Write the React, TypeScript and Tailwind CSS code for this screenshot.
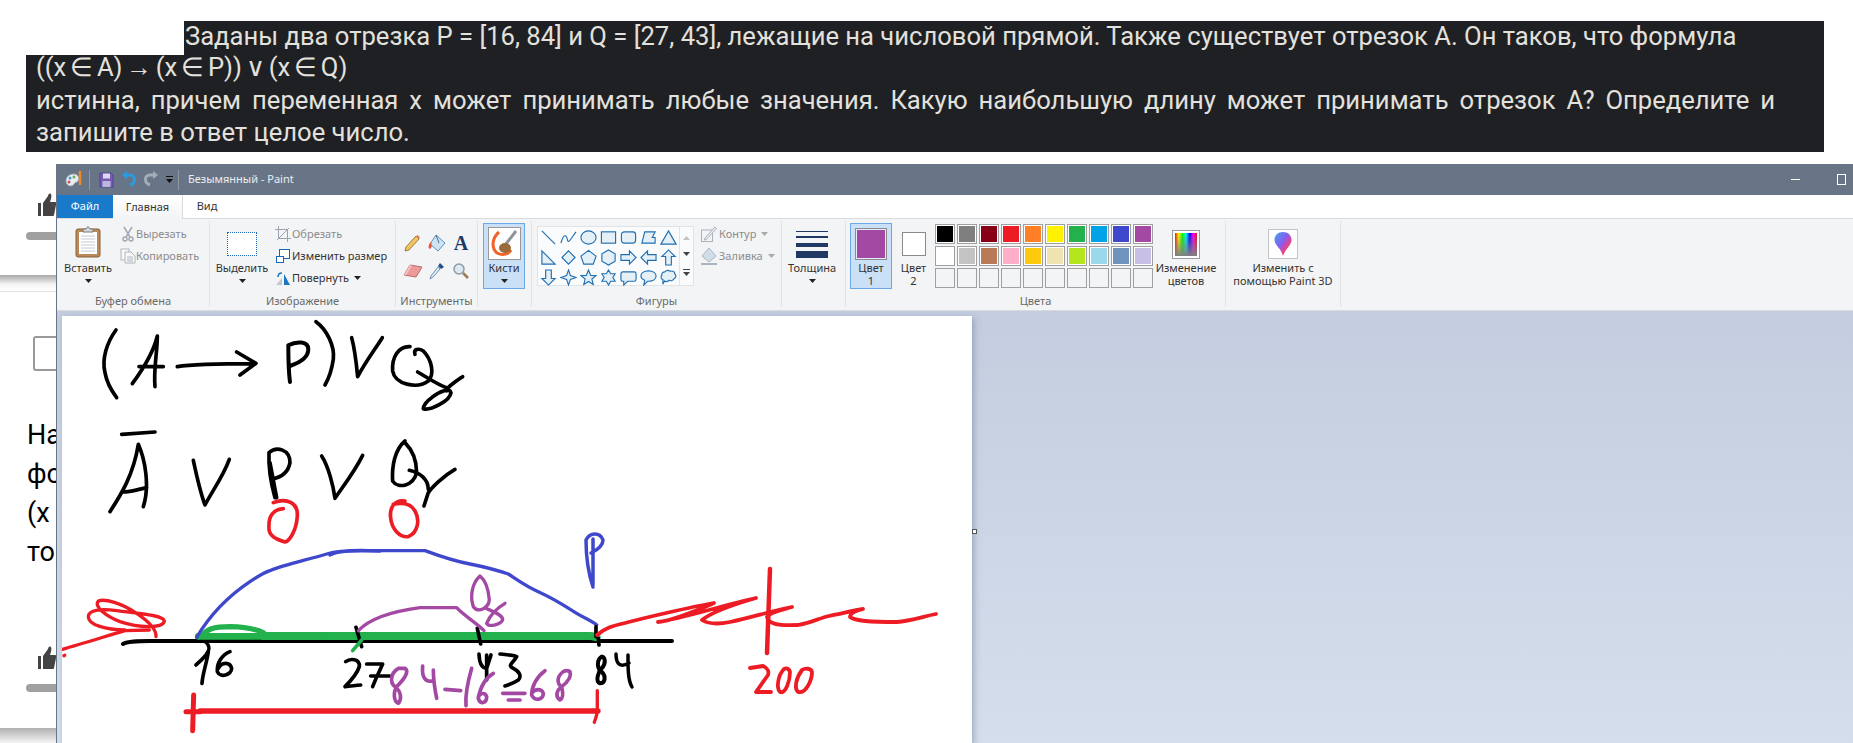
import { ReactNode } from "react";

const Arrow = ({ color = "#222" }: { color?: string }) => (
  <svg width="7" height="4" viewBox="0 0 7 4">
    <path d="M0 0H7L3.5 4Z" fill={color} />
  </svg>
);

const Group = ({ width, label, children }: { width: string; label: string; children: ReactNode }) => (
  <div className={`${width} mt-[2px] h-[86px] shrink-0 flex flex-col border-r border-[#e2e3e4]`}>
    <div className="h-[73px] flex">{children}</div>
    <div className="h-[13px] leading-[13px] text-center text-[#6a6a6a]">{label}</div>
  </div>
);

const Large = ({ width, icon, lines, arrow, on }: { width: string; icon: ReactNode; lines: string[]; arrow?: boolean; on?: boolean }) => (
  <div className={`${width} h-[66px] mt-[2px] flex flex-col items-center ${on ? "bg-[#c9e0f7] outline outline-[#6ba8e5] -outline-offset-1" : ""}`}>
    <div className="h-[38px] flex items-center justify-center">{icon}</div>
    {lines.map((t) => (
      <div key={t} className="h-[13px] leading-[13px] whitespace-nowrap text-[#333]">
        {t}
      </div>
    ))}
    {arrow && (
      <div className="h-[13px] flex items-center">
        <Arrow />
      </div>
    )}
  </div>
);

const Small = ({ icon, text, gray, arrow, iconWidth }: { icon: ReactNode; text: string; gray?: boolean; arrow?: boolean; iconWidth: string }) => (
  <div className="h-[22px] flex items-center">
    <div className={`${iconWidth} flex justify-center shrink-0`}>{icon}</div>
    <span className={gray ? "text-[#8c8c8c]" : "text-[#333]"}>{text}</span>
    {arrow && (
      <span className="ml-[5px] flex">
        <Arrow color={gray ? "#aaa" : "#222"} />
      </span>
    )}
  </div>
);

const shapes: ReactNode[] = [
  <path d="M2 2L16 16" />,
  <path d="M1 15C4 4 7 6 8 12C9 16 13 8 17 3" fill="none" />,
  <ellipse cx="9" cy="9" rx="8" ry="7" />,
  <rect x="1.5" y="3" width="15" height="12" />,
  <rect x="1.5" y="3" width="15" height="12" rx="3" />,
  <path d="M2 15L5 3H16L13 9H16V15Z" />,
  <path d="M9 2L17 16H1Z" />,
  <path d="M2 2L16 16H2Z" />,
  <path d="M9 2L16 9L9 16L2 9Z" />,
  <path d="M9 1.5L17 7.5L14 16H4L1 7.5Z" />,
  <path d="M9 1L16 5V13L9 17L2 13V5Z" />,
  <path d="M1 6H10V2L17 9L10 16V12H1Z" />,
  <path d="M17 6H8V2L1 9L8 16V12H17Z" />,
  <path d="M6 17V8H2L9 1L16 8H12V17Z" />,
  <path d="M6 1V10H2L9 17L16 10H12V1Z" />,
  <path d="M9 1L11 7L17 9L11 11L9 17L7 11L1 9L7 7Z" />,
  <path d="M9 1L11.3 6.8L17 7L12.6 10.6L14 16.5L9 13.2L4 16.5L5.4 10.6L1 7L6.7 6.8Z" />,
  <path d="M9 1L11.3 5H16L13.6 9L16 13H11.3L9 17L6.7 13H2L4.4 9L2 5H6.7Z" />,
  <path d="M3 3H15Q17 3 17 5V11Q17 13 15 13H8L4 17V13H3Q1 13 1 11V5Q1 3 3 3Z" />,
  <path d="M9 2C14 2 17 4.500 17 7.500C17 10.500 14 13 9 13H8L4 17L5 12C2.500 11 1 9.500 1 7.500C1 4.500 4 2 9 2Z" />,
  <path d="M5 3C7 1 9 1 11 2.500C13 1.500 16 3 15.500 5C17.500 6.500 17 9.500 15 10C14.500 12 11 13 9.500 12C8 13.500 6 13.500 5 12.500L3 16L3.200 11.500C1 10.500 .5 8 2 6.500C1.500 5 3 3 5 3Z" />,
];

const row1 = ["#000000", "#7f7f7f", "#880015", "#ed1c24", "#ff7f27", "#fff200", "#22b14c", "#00a2e8", "#3f48cc", "#a349a4"];
const row2 = ["#ffffff", "#c3c3c3", "#b97a57", "#ffaec9", "#ffc90e", "#efe4b0", "#b5e61d", "#99d9ea", "#7092be", "#c8bfe7"];
const row3 = Array(10).fill("#f3f4f6");

const PasteIcon = () => (
  <svg width="26" height="32" viewBox="0 0 26 32">
    <rect x="1" y="3" width="24" height="28" rx="2" fill="#b98a58" stroke="#8a6238" />
    <rect x="4" y="6" width="18" height="22" fill="#fff" />
    <path d="M6 10H20M6 13H20M6 16H20M6 19H20M6 22H20M6 25H20" stroke="#c2c8d0" />
    <path d="M8 6V3H11L13 0.500L15 3H18V6Z" fill="#d6d9dd" stroke="#777" />
  </svg>
);
const CutIcon = () => (
  <svg width="12" height="16" viewBox="0 0 12 16" fill="none" stroke="#a4a9b4" strokeWidth="1.500">
    <path d="M2 1L8 11M10 1L4 11" />
    <circle cx="3" cy="13" r="2" />
    <circle cx="9" cy="13" r="2" />
  </svg>
);
const CopyIcon = () => (
  <svg width="16" height="16" viewBox="0 0 16 16" fill="#f7f8f9" stroke="#b0b6bf">
    <rect x="1" y="1" width="8" height="11" />
    <path d="M5 4H11L15 8V15H5Z" />
    <path d="M7 9H13M7 11H13M7 13H13" />
  </svg>
);
const CropIcon = () => (
  <svg width="16" height="16" viewBox="0 0 16 16" fill="none" stroke="#9aa2ad">
    <path d="M3.500 0V12.500H16M0 3.500H12.500V16M2 14L14 2" />
  </svg>
);
const ResizeIcon = () => (
  <svg width="14" height="14" viewBox="0 0 14 14" fill="#fff" stroke="#1b67b2">
    <rect x="3.500" y=".5" width="10" height="9" />
    <rect x=".5" y="7.500" width="7" height="6" />
  </svg>
);
const RotateIcon = () => (
  <svg width="16" height="15" viewBox="0 0 16 15">
    <path d="M1 14L7 7V14Z" fill="#c4c8cc" />
    <path d="M9 14V3L15 14Z" fill="#1b76c4" />
    <path d="M3 6C3 3 5 2 7 2" fill="none" stroke="#1b76c4" strokeWidth="1.500" />
  </svg>
);

const tools: ReactNode[] = [
  <svg width="18" height="18" viewBox="0 0 18 18">
    <path d="M2 13L12 2L15 5L5 16L1 17Z" fill="#f2c463" stroke="#9a8040" />
    <path d="M12 2L15 5L16 4L14 1Z" fill="#e07a6a" />
  </svg>,
  <svg width="20" height="20" viewBox="0 0 20 20">
    <path d="M9 2L18 10L11 18L3 11Z" fill="#cfe3f2" stroke="#5d90bd" />
    <path d="M9 2L12 10" stroke="#3f6f99" />
    <path d="M4 9C1 12 1 15 3 16C5 15 5 12 4 9Z" fill="#e8553a" />
  </svg>,
  <span className="font-['Liberation_Serif',serif] font-bold text-[20px] leading-none text-[#1f3864]">A</span>,
  <svg width="20" height="16" viewBox="0 0 20 16">
    <path d="M7 2L19 4L13 14L1 12Z" fill="#ee9a9a" stroke="#b86a6a" />
    <path d="M1 12L7 2L9 2.500L3 12.300Z" fill="#f7c4c4" />
  </svg>,
  <svg width="18" height="20" viewBox="0 0 18 20">
    <path d="M12 2L16 6L13 8L10 5Z" fill="#1f4e8c" />
    <path d="M10 6L12 8L5 16L2 18L3 15Z" fill="#e3edf5" stroke="#6f8fae" />
  </svg>,
  <svg width="18" height="18" viewBox="0 0 18 18" fill="none">
    <circle cx="7" cy="7" r="5" fill="#dbe9f2" stroke="#8f9aa5" strokeWidth="1.500" />
    <path d="M11 11L16 16" stroke="#9a7a50" strokeWidth="2.500" />
  </svg>,
];

const Swatch = ({ color, empty }: { color: string; empty?: boolean }) => (
  <div className={`w-[20px] h-[20px] border border-[#a0a0a0] ${empty ? "" : "p-[1px] bg-white"}`}>
    <div className="w-full h-full" style={{ backgroundColor: color }} />
  </div>
);

const Ribbon = () => (
  <div className="h-[93px] shrink-0 flex bg-[#f3f4f6] border-y border-[#dadbdc] text-[11px]">
    <Group width="w-[153px]" label="Буфер обмена">
      <Large width="w-[62px]" icon={<PasteIcon />} lines={["Вставить"]} arrow />
      <div className="pt-[2px]">
        <Small iconWidth="w-[17px]" icon={<CutIcon />} text="Вырезать" gray />
        <Small iconWidth="w-[17px]" icon={<CopyIcon />} text="Копировать" gray />
      </div>
    </Group>
    <Group width="w-[186px]" label="Изображение">
      <Large
        width="w-[64px]"
        icon={<div className="w-[30px] h-[24px] mt-[4px] bg-white border border-dotted border-[#1b67b2]" />}
        lines={["Выделить"]}
        arrow
      />
      <div className="pt-[2px]">
        <Small iconWidth="w-[18px]" icon={<CropIcon />} text="Обрезать" gray />
        <Small iconWidth="w-[18px]" icon={<ResizeIcon />} text="Изменить размер" />
        <Small iconWidth="w-[18px]" icon={<RotateIcon />} text="Повернуть" arrow />
      </div>
    </Group>
    <Group width="w-[82px]" label="Инструменты">
      <div className="pl-[5px] pt-[8px] grid grid-cols-[24px_24px_24px] auto-rows-[28px] place-items-center">{tools}</div>
    </Group>
    <Group width="w-[54px]" label="">
      <div className="ml-[5px]">
        <Large
          width="w-[42px]"
          on
          icon={
            <div className="w-[33px] h-[33px] mt-[2px] bg-white border border-[#9a9a9a] flex items-center justify-center">
              <svg width="30" height="30" viewBox="0 0 30 30" fill="none">
                <path d="M27 3L17 16" stroke="#8c949c" strokeWidth="3" />
                <path d="M10 4C3 10 2 20 8 25C14 28 20 26 22 22" stroke="#f0642a" strokeWidth="3" />
                <ellipse cx="16" cy="20" rx="6" ry="5" fill="#9a6a3c" />
              </svg>
            </div>
          }
          lines={["Кисти"]}
          arrow
        />
      </div>
    </Group>
    <Group width="w-[250px]" label="Фигуры">
      <div className="ml-[5px] mt-[5px] w-[157px] h-[60px] flex bg-[#fafbfc] border border-[#e2e3e5]">
        <div className="w-[141px] grid grid-cols-[repeat(7,20px)] auto-rows-[20px] place-items-center">
          {shapes.map((s, i) => (
            <svg key={i} width="17" height="17" viewBox="0 0 18 18" fill="#e4f0f6" stroke="#1f6fb2" strokeWidth="1.200">
              {s}
            </svg>
          ))}
        </div>
        <div className="flex-1 border-l border-[#e2e3e5] flex flex-col items-center justify-around py-[3px]">
          <svg width="7" height="4" viewBox="0 0 7 4">
            <path d="M0 4H7L3.500 0Z" fill="#c4c4c4" />
          </svg>
          <Arrow color="#444" />
          <svg width="7" height="7" viewBox="0 0 7 7">
            <path d="M0 0H7V1H0ZM0 3H7L3.500 7Z" fill="#444" />
          </svg>
        </div>
      </div>
      <div className="ml-[5px] pt-[2px]">
        <Small iconWidth="w-[20px]" icon={<svg width="16" height="16" viewBox="0 0 16 16" fill="none" stroke="#aab2bc"><rect x=".5" y="4" width="11" height="11.500" /><path d="M4 12L14 1L15.500 2.500L5.500 13.500L3 14Z" fill="#e9edf0" /></svg>} text="Контур" gray arrow />
        <Small iconWidth="w-[20px]" icon={<svg width="18" height="18" viewBox="0 0 18 18" fill="#cfdde8" stroke="#a9b6c2"><path d="M9 1L16 9L9 15L2 9Z" /><path d="M1 17H17" strokeWidth="2" /></svg>} text="Заливка" gray arrow />
      </div>
    </Group>
    <Group width="w-[64px]" label="">
      <Large
        width="w-[60px]"
        icon={
          <div className="w-[32px] h-[28px] mt-[5px] flex flex-col justify-between">
            <div className="h-[1px] bg-[#1f3864]" />
            <div className="h-[2px] bg-[#1f3864]" />
            <div className="h-[4px] bg-[#1f3864]" />
            <div className="h-[7px] bg-[#1f3864]" />
          </div>
        }
        lines={["Толщина"]}
        arrow
      />
    </Group>
    <Group width="w-[380px]" label="Цвета">
      <div className="ml-[4px]">
        <Large
          width="w-[42px]"
          on
          icon={
            <div className="w-[32px] h-[32px] mt-[3px] border border-[#8a8a8a] p-[1px] bg-[#e8eef5]">
              <div className="w-full h-full bg-[#a349a4]" />
            </div>
          }
          lines={["Цвет", "1"]}
        />
      </div>
      <Large
        width="w-[43px]"
        icon={<div className="w-[24px] h-[24px] mt-[3px] bg-white border border-[#8a8a8a]" />}
        lines={["Цвет", "2"]}
      />
      <div className="mt-[3px] grid grid-cols-[repeat(10,20px)] gap-[2px] self-start">
        {row1.map((c) => (
          <Swatch key={c} color={c} />
        ))}
        {row2.map((c) => (
          <Swatch key={c} color={c} />
        ))}
        {row3.map((c, i) => (
          <Swatch key={i} color={c} empty />
        ))}
      </div>
      <Large
        width="w-[66px]"
        icon={
          <div className="w-[28px] h-[29px] mt-[4px] bg-white border border-[#9a9a9a] p-[2px]">
            <div className="w-full h-full bg-[linear-gradient(to_bottom,transparent,#808080),linear-gradient(to_right,#f00,#ff0,#0f0,#0ff,#00f,#f0f,#f00)]" />
          </div>
        }
        lines={["Изменение", "цветов"]}
      />
    </Group>
    <Group width="w-[115px]" label="">
      <Large
        width="w-[115px]"
        icon={
          <div className="w-[30px] h-[30px] mt-[4px] bg-white border border-[#c4c4c4] flex items-center justify-center">
            <svg width="20" height="26" viewBox="0 0 20 26">
              <defs>
                <linearGradient id="drop" x1="0" y1="0" x2="1" y2="1">
                  <stop offset="0" stopColor="#3ca6f0" />
                  <stop offset=".45" stopColor="#8a5cf0" />
                  <stop offset=".7" stopColor="#f0407a" />
                  <stop offset="1" stopColor="#f7b500" />
                </linearGradient>
              </defs>
              <path d="M10 1C15 1 18.500 4.500 18.500 9C18.500 14 13 17 10 25C8 17 1.500 14 1.500 9C1.500 4.500 5 1 10 1Z" fill="url(#drop)" />
            </svg>
          </div>
        }
        lines={["Изменить с", "помощью Paint 3D"]}
      />
    </Group>
  </div>
);

const TitleBar = () => (
  <div className="h-[31px] shrink-0 flex items-center bg-[#687587] pl-[8px] text-[11px] text-[#ebedf0]">
    <svg width="18" height="19" viewBox="0 0 18 19">
      <path d="M1 11C1 6 5 4 9 4C13 4 15 8 13 11C11 13 10 12 9 14C8 17 1 17 1 11Z" fill="#e9edf2" stroke="#9aa7b5" />
      <circle cx="5" cy="8" r="1.500" fill="#4b9ad6" />
      <circle cx="9" cy="7" r="1.500" fill="#6bb24c" />
      <circle cx="4" cy="12" r="1.500" fill="#d94f4f" />
      <path d="M15 1V15" stroke="#f08a24" strokeWidth="2.500" />
    </svg>
    <div className="w-[1px] h-[20px] bg-[#8f99a6] ml-[6px]" />
    <svg className="ml-[9px]" width="15" height="16" viewBox="0 0 15 16">
      <path d="M1 1H12L14 3V15H1Z" fill="#7a5ab5" stroke="#4c4590" />
      <rect x="4" y="1.500" width="7" height="5" fill="#dcd8f0" />
      <rect x="3.500" y="9" width="8" height="6" fill="#bcb6e0" />
    </svg>
    <svg className="ml-[8px]" width="14" height="17" viewBox="0 0 14 17" fill="none">
      <path d="M2 4H8C14 4 14 12 8 14" stroke="#2a9be0" strokeWidth="3" />
      <path d="M0 4L5 0V8Z" fill="#2a9be0" />
    </svg>
    <svg className="ml-[8px]" width="14" height="17" viewBox="0 0 14 17" fill="none">
      <path d="M12 4H6C0 4 0 12 6 14" stroke="#a3adb9" strokeWidth="3" />
      <path d="M14 4L9 0V8Z" fill="#a3adb9" />
    </svg>
    <svg className="ml-[8px]" width="7" height="8" viewBox="0 0 7 8">
      <path d="M0 0H7V1H0ZM0 3H7L3.500 7Z" fill="#111" />
    </svg>
    <div className="w-[1px] h-[20px] bg-[#8f99a6] ml-[5px]" />
    <span className="ml-[9px]">Безымянный - Paint</span>
    <div className="ml-auto mr-[7px] flex items-center">
      <div className="w-[9px] h-[1px] bg-white mr-[37px]" />
      <div className="w-[9px] h-[11px] border border-white" />
    </div>
  </div>
);

const Tabs = () => (
  <div className="h-[23px] shrink-0 flex bg-white text-[11px] text-[#333]">
    <div className="w-[56px] bg-[#1979ca] text-white flex items-center justify-center">Файл</div>
    <div className="relative z-10 w-[70px] h-[24px] flex items-center justify-center border-r border-[#dadbdc] bg-[linear-gradient(to_bottom,#ffffff,#f3f4f6)]">Главная</div>
    <div className="w-[48px] flex items-center justify-center">Вид</div>
  </div>
);

const Drawing = () => (
  <svg className="block" width="910" height="427" viewBox="62 316 910 427" fill="none" strokeLinecap="round" strokeLinejoin="round">
    {/* верхние две строки, координаты из увеличенного кадра */}
    <g transform="translate(70 316) scale(.3333)" stroke="#000" strokeWidth="11">
      <path d="M138 42C110 80 95 130 105 170C110 200 125 225 140 245" />
      <path d="M187 203C215 165 250 110 262 60C262 110 250 160 255 212M207 152L280 152" />
      <path d="M322 152C345 148 380 143 555 143M500 108L558 142L510 177" />
      <path d="M660 198C655 160 655 120 655 88C680 75 715 75 715 100C715 125 690 140 660 150" strokeWidth="12" />
      <path d="M738 17C770 40 795 90 790 130C785 165 775 190 765 207" />
      <path d="M845 65C855 100 860 150 863 182C885 140 915 100 937 65" />
      <path d="M1020 92C985 90 965 125 968 165C975 205 1040 220 1075 195C1095 175 1085 130 1060 105C1045 95 1030 100 1035 115M1043 168C1080 190 1110 210 1130 215" />
      <path d="M1178 182C1145 205 1130 215 1130 225M1060 278C1080 285 1140 255 1143 230C1140 215 1110 225 1085 245C1070 255 1060 270 1060 278" />
      <path d="M155 355L255 348" />
      <path d="M120 587C150 540 190 480 205 385C225 430 240 510 220 572M160 528C180 528 205 520 230 515" />
      <path d="M370 433C380 480 395 540 405 567C430 520 460 480 478 430" />
      <path d="M615 545C605 510 595 460 597 410C620 390 660 400 660 440C655 470 630 485 605 490M600 440L620 545" />
      <path d="M755 420C775 450 790 510 795 547C820 510 855 465 878 418" />
      <path d="M1005 375C975 400 965 450 968 495C985 520 1030 510 1040 470C1040 430 1025 400 1005 380M1018 463C1050 470 1075 490 1075 520" />
      <path d="M1155 460C1120 480 1085 515 1075 530L1062 570" />
      <g stroke="#ed1c24">
        <path d="M610 560C650 545 685 560 682 600C680 640 660 675 645 678C620 670 595 660 597 635C595 600 610 580 640 578" />
        <path d="M1005 555C975 550 958 575 962 605C965 640 990 665 1015 662C1045 650 1050 610 1035 585C1025 565 1005 558 970 565" />
      </g>
    </g>
    {/* числовая прямая */}
    <path d="M123 644C128 641 137 641 150 641L672 641" stroke="#000" strokeWidth="4" />
    <g transform="translate(50 540) scale(.3333)" strokeWidth="10">
      <path d="M37 328C100 310 180 285 225 272L298 270M42 347L44 346" stroke="#ed1c24" />
      <path d="M225 270C170 270 115 255 115 230C115 210 150 205 200 212C260 220 340 225 343 243C340 265 270 265 210 245C170 230 130 200 145 183C165 175 215 190 260 220C290 240 320 265 318 290" stroke="#ed1c24" />
      <path d="M458 285C470 268 490 260 540 260C580 261 620 268 640 278" stroke="#22b14c" strokeWidth="16" />
      <path d="M445 289H640" stroke="#22b14c" strokeWidth="20" />
      <path d="M640 288H960" stroke="#22b14c" strokeWidth="24" />
      <path d="M440 292C480 225 540 165 600 125C630 105 650 95 660 92C700 75 770 60 830 42C870 30 930 30 990 33" stroke="#3f48cc" />
      <path d="M465 305C480 315 480 330 470 340" stroke="#000" />
      <path d="M438 375C455 360 470 345 475 335C470 370 458 400 456 430M540 335C515 345 500 370 502 395C510 415 545 405 545 385C540 365 515 365 505 385" stroke="#000" strokeWidth="11" />
      <path d="M431 465L428 572M408 515L450 515" stroke="#ed1c24" strokeWidth="15" />
      <path d="M450 513H1644" stroke="#ed1c24" strokeWidth="16" />
    </g>
    <g transform="translate(330 540) scale(.3333)" strokeWidth="10">
      <path d="M0 288H780C790 288 795 291 800 292" stroke="#22b14c" strokeWidth="24" />
      <path d="M0 45C20 35 50 32 100 32L285 32C320 45 380 65 420 72C460 80 500 90 535 102C570 125 590 140 625 155C680 180 700 195 740 220C765 235 790 245 800 255" stroke="#3f48cc" />
      <path d="M78 262L95 320M442 265L452 312M798 260L798 290M805 295L807 315" stroke="#000" strokeWidth="11" />
      <path d="M95 300L68 332" stroke="#22b14c" strokeWidth="11" />
      <path d="M85 272C120 235 180 215 270 203L380 203C400 225 440 250 462 272" stroke="#a349a4" />
      <path d="M450 108C425 130 420 170 430 200C445 220 475 205 478 180C475 140 465 120 450 108M525 190C500 205 480 225 470 250C475 262 510 255 518 240C520 225 490 215 468 205" stroke="#a349a4" />
      <g stroke="#000" strokeWidth="11">
        <path d="M47 365C60 355 90 355 88 380C80 405 60 425 45 440C60 438 75 437 92 435" />
        <path d="M110 372L158 372C150 390 135 420 128 440M122 408L180 408" />
        <path d="M447 342C448 365 455 385 470 385C475 370 480 355 483 345M470 345L470 420" />
        <path d="M510 342C530 345 555 345 560 350C550 370 530 375 550 385C570 395 575 410 565 420C550 430 535 435 525 438" />
        <path d="M815 350C800 360 800 385 815 395C830 410 825 430 810 430C795 425 805 395 815 385C830 370 825 350 815 350" strokeWidth="12" />
      </g>
      <g stroke="#a349a4" strokeWidth="11">
        <path d="M205 385C180 400 180 430 195 440C215 455 215 480 205 490C190 485 190 455 200 440C220 420 240 395 225 385C215 385 205 385 205 385" />
        <path d="M278 378C275 410 285 430 310 422M310 390C310 420 315 450 320 475" />
        <path d="M345 448L392 452M425 385C415 420 405 460 408 497" />
        <path d="M490 400C465 415 450 445 445 475C450 495 470 490 470 470C465 455 450 460 445 470" />
        <path d="M518 460L585 460M535 480L570 480" />
        <path d="M645 392C620 410 605 440 605 465C615 485 640 480 640 460C635 445 615 445 605 460" />
        <path d="M700 395C680 410 680 430 695 440C700 460 700 475 690 480C675 470 680 450 695 440C715 425 725 410 720 395C712 390 705 392 700 395" />
      </g>
      <path d="M802 452L802 510C802 525 795 540 793 547" stroke="#ed1c24" />
    </g>
    <path d="M616 654C616 664 620 668 629 663M628 655C628 670 628 680 632 687" stroke="#000" strokeWidth="3.500" />
    <path d="M593 587C588 572 586 555 586 540C590 532 600 532 603 540C603 546 597 550 591 553M593 539L593 585" stroke="#3f48cc" strokeWidth="3.500" />
    <g stroke="#ed1c24" strokeWidth="3.800">
      <path d="M597 635C605 628 612 626 625 623C640 619 690 607 714 603C700 609 675 620 658 622C680 619 720 606 756 598C735 604 712 612 702 620C710 625 720 624 730 622C750 618 775 610 792 607C782 610 770 612 767 617C768 623 775 626 798 625C810 623 820 618 829 616C840 614 855 610 863 609C855 611 850 614 850 617C855 621 870 622 897 622C910 621 925 616 936 614" />
      <path d="M770 569L767 653" strokeWidth="4.500" />
      <path d="M750 668L763 666C768 668 769 672 768 675L756 692L771 692" />
      <path d="M784 669C778 675 776 688 780 692C786 694 790 680 790 672C789 668 786 668 784 669" />
      <path d="M802 670C796 678 794 688 798 692C806 694 812 680 812 672C811 668 805 668 802 670" />
    </g>
  </svg>
);

const PaintWindow = () => (
  <div className="absolute left-[56px] top-[164px] right-0 bottom-0 flex flex-col border-l border-[#687587] font-['Noto_Sans',sans-serif]">
    <TitleBar />
    <Tabs />
    <Ribbon />
    <div className="relative flex-1 overflow-hidden pl-[5px] pt-[5px] bg-[linear-gradient(to_bottom,#c3cddf,#d4deec)]">
      <div className="w-[910px] bg-white shadow-[2px_2px_6px_rgba(100,120,150,0.5)]">
        <Drawing />
      </div>
      <div className="absolute left-[915px] top-[218px] w-[5px] h-[5px] bg-white border border-[#555]" />
    </div>
  </div>
);

const Thumb = () => (
  <svg width="19" height="24" viewBox="0 0 19 24" fill="#444">
    <rect x="0" y="10" width="3" height="13" />
    <path d="M5 10L10 3C10 1 12 0 13 1C14 3 13 6 12 9H17C19 9 19 11 18 12L16 22C16 23 15 23 14 23H5Z" />
  </svg>
);

const App = () => (
  <div className="relative w-[1853px] h-[743px] overflow-hidden bg-white font-['Roboto',sans-serif]">
    <div className="ml-[26px] mr-[29px] pt-[21px] text-[25.6px] text-[#e3e1dd]">
      <div className="flex h-[34px]">
        <div className="w-[158px] shrink-0 bg-white" />
        <div className="flex-1 bg-[#1f2023] leading-[31px] whitespace-nowrap pl-[1px]">
          Заданы два отрезка P = [16, 84] и Q = [27, 43], лежащие на числовой прямой. Также существует отрезок A. Он таков, что формула
        </div>
      </div>
      <div className="h-[97px] bg-[#1f2023] pl-[10px]">
        <div className="h-[29px] leading-[24px] [word-spacing:-2.500px]">((x ∈ A) → (x ∈ P)) ∨ (x ∈ Q)</div>
        <p className="w-[1739px] text-justify leading-[32px]">
          истинна, причем переменная x может принимать любые значения. Какую наибольшую длину может принимать отрезок A? Определите и запишите в ответ целое число.
        </p>
      </div>
    </div>
    <div className="h-[123px] pl-[38px] pt-[41px]">
      <Thumb />
      <div className="-ml-[12px] mt-[15px] h-[8px] w-[40px] rounded-full bg-[#a0a0a0]" />
    </div>
    <div className="h-[17px] bg-[linear-gradient(to_bottom,#a8a8a8,#f5f5f5_60%,#fff)] border-b border-[#e2e2e2]" />
    <div className="h-[436px] pl-[27px] pt-[44px]">
      <div className="ml-[6px] h-[35px] w-[40px] rounded-[3px] border-2 border-[#999]" />
      <div className="mt-[45px] text-[27px] leading-[39px] text-black">
        <div>Нам</div>
        <div>фор</div>
        <div>(x ∈</div>
        <div>тог</div>
      </div>
      <div className="ml-[11px] mt-[74px]">
        <Thumb />
      </div>
      <div className="-ml-[1px] mt-[14px] h-[8px] w-[40px] rounded-full bg-[#a0a0a0]" />
    </div>
    <div className="h-[15px] bg-[linear-gradient(to_bottom,#b0b0b0,#f5f5f5)]" />
    <PaintWindow />
  </div>
);

export default App;
